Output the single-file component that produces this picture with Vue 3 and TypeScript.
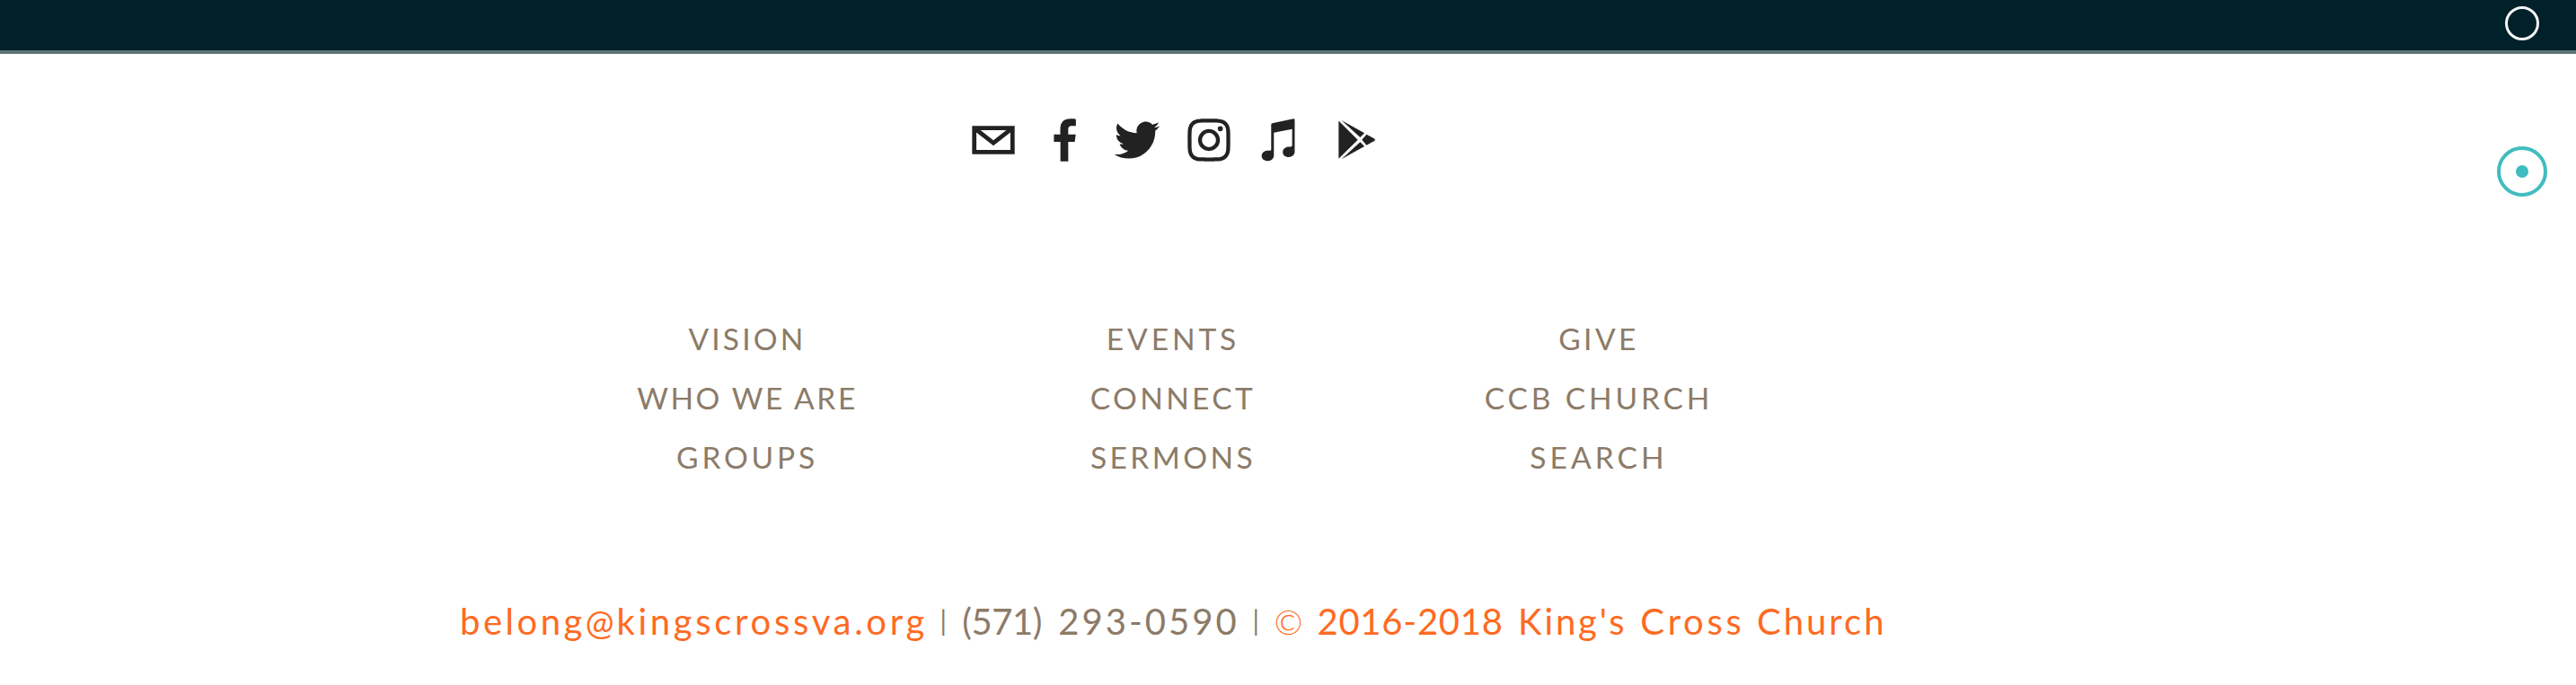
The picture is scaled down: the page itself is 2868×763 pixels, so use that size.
<script setup lang="ts">
interface NavLink { label: string; tracking: number }
interface Segment { text: string; tone: string; tracking: number; gap: number }
interface Social { name: string; path: string }

const columns: NavLink[][] = [
  [
    { label: 'VISION', tracking: 3.2 },
    { label: 'WHO WE ARE', tracking: 2.6 },
    { label: 'GROUPS', tracking: 3.8 },
  ],
  [
    { label: 'EVENTS', tracking: 3.95 },
    { label: 'CONNECT', tracking: 3.35 },
    { label: 'SERMONS', tracking: 3.4 },
  ],
  [
    { label: 'GIVE', tracking: 3.4 },
    { label: 'CCB CHURCH', tracking: 3.85 },
    { label: 'SEARCH', tracking: 4.1 },
  ],
]

const segments: Segment[] = [
  { text: 'belong', tone: 'accent', tracking: 3.5, gap: 0 },
  { text: '@', tone: 'accent at', tracking: 0, gap: 0 },
  { text: 'kingscrossva.org', tone: 'accent', tracking: 3.7, gap: 1.2 },
  { text: '|', tone: 'bar', tracking: 0, gap: 7.2 },
  { text: '(571)', tone: 'muted', tracking: -0.4, gap: 11 },
  { text: '293-0590', tone: 'muted', tracking: 3.05, gap: 18 },
  { text: '|', tone: 'bar', tracking: 0, gap: 8.5 },
  { text: '©', tone: 'accent mark', tracking: 0, gap: 10.2 },
  { text: '2016-2018', tone: 'accent', tracking: 0.75, gap: 16 },
  { text: "King's", tone: 'accent', tracking: 2.85, gap: 16.4 },
  { text: 'Cross', tone: 'accent', tracking: 3.7, gap: 14.8 },
  { text: 'Church', tone: 'accent', tracking: 3, gap: 13.5 },
]

const socials: Social[] = [
  { name: 'Email', path: 'M17,22v20h30V22H17z M41.1,25L32,32.1L22.9,25H41.1z M20,39V26.6l12,9.3l12-9.3V39H20z' },
  { name: 'Facebook', path: 'M34.1,47V33.3h4.6l0.7-5.3h-5.3v-3.4c0-1.5,0.4-2.6,2.6-2.6l2.8,0v-4.8c-0.5-0.1-2.2-0.2-4.1-0.2c-4.1,0-6.9,2.5-6.9,7V28H24v5.3h4.6V47H34.1z' },
  { name: 'Twitter', path: 'M48,22.1c-1.2,0.5-2.4,0.9-3.8,1c1.4-0.8,2.4-2.1,2.9-3.6c-1.3,0.8-2.7,1.3-4.2,1.6C41.7,19.8,40,19,38.2,19c-3.6,0-6.6,2.9-6.6,6.6c0,0.5,0.1,1,0.2,1.5c-5.5-0.3-10.3-2.9-13.5-6.9c-0.6,1-0.9,2.1-0.9,3.3c0,2.3,1.2,4.3,2.9,5.5c-1.1,0-2.1-0.3-3-0.8c0,0,0,0.1,0,0.1c0,3.2,2.3,5.8,5.3,6.4c-0.6,0.1-1.1,0.2-1.7,0.2c-0.4,0-0.8,0-1.2-0.1c0.8,2.6,3.3,4.5,6.1,4.6c-2.2,1.8-5.1,2.8-8.2,2.8c-0.5,0-1.1,0-1.6-0.1c2.9,1.9,6.4,2.9,10.1,2.9c12.1,0,18.7-10,18.7-18.7c0-0.3,0-0.6,0-0.8C46,24.5,47.1,23.4,48,22.1z' },
  { name: 'Instagram', path: 'M46.91,25.816c-0.073-1.597-0.326-2.687-0.697-3.641c-0.383-0.986-0.896-1.823-1.73-2.657c-0.834-0.834-1.67-1.347-2.657-1.73c-0.954-0.371-2.045-0.624-3.641-0.697C36.585,17.017,36.074,17,32,17s-4.585,0.017-6.184,0.09c-1.597,0.073-2.687,0.326-3.641,0.697c-0.986,0.383-1.823,0.896-2.657,1.73c-0.834,0.834-1.347,1.67-1.73,2.657c-0.371,0.954-0.624,2.045-0.697,3.641C17.017,27.415,17,27.926,17,32c0,4.074,0.017,4.585,0.09,6.184c0.073,1.597,0.326,2.687,0.697,3.641c0.383,0.986,0.896,1.823,1.73,2.657c0.834,0.834,1.67,1.347,2.657,1.73c0.954,0.371,2.045,0.624,3.641,0.697C27.415,46.983,27.926,47,32,47s4.585-0.017,6.184-0.09c1.597-0.073,2.687-0.326,3.641-0.697c0.986-0.383,1.823-0.896,2.657-1.73c0.834-0.834,1.347-1.67,1.73-2.657c0.371-0.954,0.624-2.045,0.697-3.641C46.983,36.585,47,36.074,47,32S46.983,27.415,46.91,25.816z M44.21,38.061c-0.067,1.462-0.311,2.257-0.516,2.785c-0.272,0.7-0.597,1.2-1.122,1.725c-0.525,0.525-1.025,0.85-1.725,1.122c-0.529,0.205-1.323,0.45-2.785,0.516c-1.581,0.072-2.056,0.087-6.061,0.087s-4.48-0.015-6.061-0.087c-1.462-0.067-2.257-0.311-2.785-0.516c-0.7-0.272-1.2-0.597-1.725-1.122c-0.525-0.525-0.85-1.025-1.122-1.725c-0.205-0.529-0.45-1.323-0.516-2.785c-0.072-1.582-0.087-2.056-0.087-6.061s0.015-4.48,0.087-6.061c0.067-1.462,0.311-2.257,0.516-2.785c0.272-0.7,0.597-1.2,1.122-1.725c0.525-0.525,1.025-0.85,1.725-1.122c0.529-0.205,1.323-0.45,2.785-0.516c1.582-0.072,2.056-0.087,6.061-0.087s4.48,0.015,6.061,0.087c1.462,0.067,2.257,0.311,2.785,0.516c0.7,0.272,1.2,0.597,1.725,1.122c0.525,0.525,0.85,1.025,1.122,1.725c0.205,0.529,0.45,1.323,0.516,2.785c0.072,1.582,0.087,2.056,0.087,6.061S44.282,36.48,44.21,38.061z M32,24.297a7.703,7.703 0 1 0 0,15.406a7.703,7.703 0 1 0 0,-15.406z M32,27a5,5 0 1 1 0,10a5,5 0 1 1 0,-10z M40.007,22.193a1.8,1.8 0 1 0 0,3.6a1.8,1.8 0 1 0 0,-3.6z' },
  { name: 'Music', path: 'M26,20.1L41,17q0.8-0.1,0.8,0.7V40.1c0,2.2-1.7,3.9-4.3,3.9c-2.3,0-4.1-1.5-4.1-3.5c0-2.2,1.8-3.8,4.3-3.8h1.2c0.7,0,1.1-0.3,1.1-1V24.2L27.1,26.7V42.8c0,2.3-1.8,4-4.4,4c-2.4,0-4.2-1.5-4.2-3.5c0-2.2,1.8-3.8,4.3-3.8h1.2c0.8,0,1.2-0.3,1.2-1V21Q25.2,20.3,26,20.1z' },
  { name: 'Google Play', path: 'M22.1,18.4L35.6,31.8L22.1,45.2z M24.1,18.1L40.3,27.1L37.3,30.1z M24.1,45.5L40.3,36.5L37.3,33.5z M38.5,31.8L41.8,28L47.3,31Q48.3,31.8,47.3,32.6L41.8,35.6z' },
]
</script>

<template>
  <div class="page">
    <header class="band"></header>

    <div class="social">
      <a v-for="s in socials" :key="s.name" :aria-label="s.name">
        <svg viewBox="6.65 6.65 50.7 50.7"><path fill-rule="evenodd" :d="s.path" /></svg>
      </a>
    </div>

    <nav class="links">
      <div v-for="(col, i) in columns" :key="i" class="col">
        <a v-for="l in col" :key="l.label" :style="{ letterSpacing: l.tracking + 'px' }">{{ l.label }}</a>
      </div>
    </nav>

    <footer class="contact">
      <span
        v-for="(s, i) in segments"
        :key="i"
        :class="s.tone"
        :style="{ letterSpacing: s.tracking + 'px', marginLeft: s.gap + 'px' }"
      >{{ s.text }}</span>
    </footer>

    <div class="dots">
      <span class="dot"></span>
      <span class="dot active"></span>
    </div>
  </div>
</template>

<style>
body {
  background: #fff;
}
</style>

<style scoped>
.page {
  position: relative;
  height: 763px;
  overflow: hidden;
  background: #fff;
  font-family: Lato, "Open Sans", sans-serif;
}
.band {
  box-sizing: border-box;
  height: 60px;
  background: #00202a;
  border-bottom: 4px solid #5d7377;
}
.social {
  display: flex;
  padding: 56px 0 0 1066px;
}
.social a,
.social svg {
  display: block;
  width: 80px;
  height: 80px;
}
.social path {
  fill: #222;
}
.links {
  display: grid;
  grid-template-columns: repeat(3, 474px);
  margin: 148px 0 0 595px;
}
.col {
  display: flex;
  flex-direction: column;
  align-items: center;
}
.col a {
  font-size: 33.5px;
  line-height: 66px;
  color: #8c7b68;
  white-space: nowrap;
}
.contact {
  display: flex;
  align-items: baseline;
  margin: 120px 0 0 512px;
  font-size: 40px;
  line-height: 60px;
  white-space: nowrap;
  color: #8c7b68;
}
.accent {
  color: #ff6a22;
}
.at {
  width: 33.5px;
  font-size: 38px;
}
.mark {
  font-size: 38px;
  font-weight: 300;
}
.bar {
  width: 20px;
  font-size: 30px;
  line-height: 40px;
  text-align: center;
  transform: translateY(-4px);
}
.dots {
  position: absolute;
  top: 7px;
  right: 32px;
  display: flex;
  flex-direction: column;
  align-items: center;
  gap: 118px;
}
.dot {
  box-sizing: border-box;
  width: 38px;
  height: 38px;
  border: 3px solid #f4f6f6;
  border-radius: 50%;
}
.dot.active {
  display: grid;
  place-items: center;
  width: 56px;
  height: 56px;
  border: 4px solid #41bcc0;
}
.dot.active::after {
  content: "";
  width: 14px;
  height: 14px;
  border-radius: 50%;
  background: #41bcc0;
}
</style>
